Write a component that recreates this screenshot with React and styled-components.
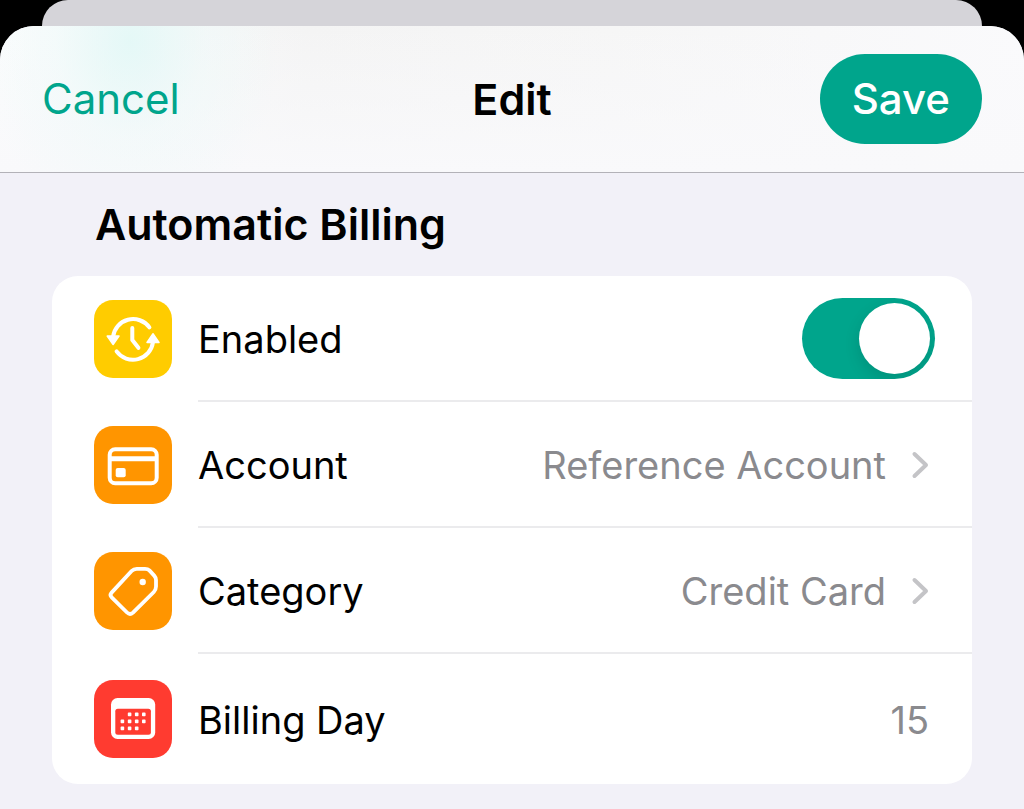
import React, { useState } from 'react';
import styled, { createGlobalStyle } from 'styled-components';

const GlobalStyle = createGlobalStyle`
  * {
    box-sizing: border-box;
  }

  body {
    margin: 0;
    background: #000;
    color: #000;
    font-family: Inter, 'Liberation Sans', sans-serif;
  }

  button,
  input {
    font: inherit;
  }
`;

const Screen = styled.div`
  display: flex;
  flex-direction: column;
  min-height: 100vh;
`;

const BackSheet = styled.div`
  height: 26px;
  margin: 0 42px;
  background: #d5d4d9;
  border-radius: 26px 26px 0 0;
`;

const Sheet = styled.div`
  flex: 1;
  background: #f2f1f8;
  border-radius: 34px 34px 0 0;
  overflow: hidden;
`;

const Header = styled.header`
  display: grid;
  grid-template-columns: 1fr auto 1fr;
  align-items: center;
  height: 147px;
  padding: 0 42px;
  border-bottom: 1px solid #b3b2b8;
  background:
    radial-gradient(ellipse 150px 190px at 130px 15px, rgba(222, 248, 246, 0.75), rgba(235, 250, 249, 0.4) 50%, transparent),
    linear-gradient(to bottom, transparent, #f9f9fb),
    linear-gradient(to right, #fbfcfd, #f4f4f4 30%, #f6f6f6 60%, #fafafc);
`;

const Title = styled.h1`
  margin: 0;
  font-size: 43px;
  font-weight: 600;
  line-height: 52px;
`;

const CancelButton = styled.button`
  justify-self: start;
  padding: 0;
  border: none;
  background: none;
  color: #00a58c;
  font-size: 42px;
  line-height: 52px;
  cursor: pointer;
`;

const SaveButton = styled.button`
  justify-self: end;
  height: 90px;
  padding: 0 32px;
  border: none;
  border-radius: 45px;
  background: #00a58c;
  color: #fff;
  font-size: 42px;
  font-weight: 500;
  line-height: 52px;
  cursor: pointer;
`;

const Content = styled.main`
  padding: 25px 52px;
`;

const SectionTitle = styled.h2`
  margin: 0 0 26px;
  padding-left: 43px;
  font-size: 43px;
  font-weight: 600;
  line-height: 52px;
`;

const Card = styled.section`
  background: #fff;
  border-radius: 26px;
`;

const Row = styled.div`
  display: flex;
  align-items: center;
  gap: 26px;
  padding-left: 42px;
`;

const IconTile = styled.span`
  display: flex;
  flex: none;
  width: 78px;
  height: 78px;
  border-radius: 19px;
  background: ${({ $color }) => $color};
`;

const RowBody = styled.div`
  display: flex;
  flex: 1;
  align-items: center;
  justify-content: space-between;
  min-width: 0;
  height: 126px;
  padding-right: ${({ $inset }) => $inset || 43}px;
  border-bottom: 2px solid #ebebed;

  ${Row}:last-child & {
    height: 130px;
    border-bottom: none;
  }
`;

const Label = styled.label`
  padding-top: 2px;
  font-size: 38px;
  line-height: 48px;
  white-space: nowrap;
`;

const PickerButton = styled.button`
  display: flex;
  align-items: center;
  gap: 25px;
  padding: 2px 0 0;
  border: none;
  background: none;
  color: #8a8a8e;
  font-size: 38px;
  line-height: 48px;
  white-space: nowrap;
  cursor: pointer;
`;

const DayInput = styled.input`
  width: 120px;
  padding: 2px 0 0;
  border: none;
  outline: none;
  background: none;
  color: #8a8a8e;
  font-size: 38px;
  line-height: 48px;
  text-align: right;
`;

const Switch = styled.input`
  appearance: none;
  width: 133px;
  height: 81px;
  margin: 0;
  padding: 5px;
  border-radius: 41px;
  background: #e9e9ea;
  overflow: hidden;
  cursor: pointer;
  transition: background 0.2s;

  &::before {
    content: '';
    display: block;
    width: 71px;
    height: 71px;
    border-radius: 50%;
    background: #fff;
    box-shadow: 0 6px 16px rgba(0, 0, 0, 0.12);
    transition: margin 0.2s;
  }

  &:checked {
    background: #00a58c;
  }

  &:checked::before {
    margin-left: 52px;
  }
`;

const HistoryIcon = () => (
  <svg width="78" height="78" viewBox="0 0 78 78" fill="none" aria-hidden="true">
    <g stroke="#fff" strokeWidth="4" strokeLinecap="round" strokeLinejoin="round">
      <path d="M55.4 27.4A20.2 20.2 0 0 0 19 37" />
      <path d="M22.6 51.4A20.2 20.2 0 0 0 59 42" />
      <path d="M38.3 28V40L44.4 47.8" />
    </g>
    <g fill="#fff" stroke="#fff" strokeWidth="1.5" strokeLinejoin="round">
      <path d="M13.2 36H25L19.1 44.5Z" />
      <path d="M53 42.4H65L59 33.8Z" />
    </g>
  </svg>
);

const CardIcon = () => (
  <svg width="78" height="78" viewBox="0 0 78 78" fill="none" aria-hidden="true">
    <rect x="15.7" y="23.3" width="47" height="34" rx="5.5" stroke="#fff" strokeWidth="4" />
    <path d="M15.7 30.2H62.7V35.2H15.7Z" fill="#fff" />
    <rect x="21.7" y="42" width="10" height="9.2" rx="2" fill="#fff" />
  </svg>
);

const TagIcon = () => (
  <svg width="78" height="78" viewBox="0 0 78 78" fill="none" aria-hidden="true">
    <path
      d="M17.6 40.6L37.6 19C39.4 17.1 40.6 16.8 42.8 16.8H51C53 16.8 54.2 17.2 55.4 18.4L60.2 23.6C61.5 25 62 26 62 28V34.6C62 36.9 61.5 38.2 59.8 40L39 60.6C37 62.4 34.9 62.4 33 60.5L17.7 45.4C16.2 43.9 16.2 42.1 17.6 40.6Z"
      stroke="#fff"
      strokeWidth="3.8"
      strokeLinejoin="round"
    />
    <circle cx="48.7" cy="30" r="3.2" fill="#fff" />
  </svg>
);

const dots = [
  [35.6, 34.4], [42.7, 34.4], [49.8, 34.4],
  [28.4, 41.4], [35.6, 41.4], [42.7, 41.4], [49.8, 41.4],
  [28.4, 48.4], [35.6, 48.4], [42.7, 48.4],
];

const CalendarIcon = () => (
  <svg width="78" height="78" viewBox="0 0 78 78" fill="#fff" aria-hidden="true">
    <rect x="17" y="18" width="44.2" height="41" rx="6.5" />
    <rect x="21.3" y="28.7" width="35.6" height="26" rx="2.5" fill="#ff3b30" />
    {dots.map(([x, y]) => (
      <rect key={`${x}-${y}`} x={x - 1.8} y={y - 1.8} width="3.6" height="3.6" rx="0.8" />
    ))}
  </svg>
);

const Chevron = () => (
  <svg width="18" height="28" viewBox="0 0 18 28" fill="none" aria-hidden="true">
    <path
      d="M3.5 3L15 14L3.5 25"
      stroke="#c4c4c7"
      strokeWidth="4"
      strokeLinecap="round"
      strokeLinejoin="round"
    />
  </svg>
);

const App = () => {
  const [enabled, setEnabled] = useState(true);
  const [day, setDay] = useState('15');

  return (
    <>
      <GlobalStyle />
      <Screen>
        <BackSheet />
        <Sheet>
          <Header>
            <CancelButton type="button">Cancel</CancelButton>
            <Title>Edit</Title>
            <SaveButton type="button">Save</SaveButton>
          </Header>
          <Content>
            <SectionTitle id="billing-title">Automatic Billing</SectionTitle>
            <Card aria-labelledby="billing-title">
              <Row>
                <IconTile $color="#ffcc00">
                  <HistoryIcon />
                </IconTile>
                <RowBody $inset={37}>
                  <Label htmlFor="enabled">Enabled</Label>
                  <Switch
                    id="enabled"
                    type="checkbox"
                    role="switch"
                    checked={enabled}
                    onChange={(e) => setEnabled(e.target.checked)}
                  />
                </RowBody>
              </Row>
              <Row>
                <IconTile $color="#ff9500">
                  <CardIcon />
                </IconTile>
                <RowBody>
                  <Label htmlFor="account">Account</Label>
                  <PickerButton id="account" type="button">
                    Reference Account
                    <Chevron />
                  </PickerButton>
                </RowBody>
              </Row>
              <Row>
                <IconTile $color="#ff9500">
                  <TagIcon />
                </IconTile>
                <RowBody>
                  <Label htmlFor="category">Category</Label>
                  <PickerButton id="category" type="button">
                    Credit Card
                    <Chevron />
                  </PickerButton>
                </RowBody>
              </Row>
              <Row>
                <IconTile $color="#ff3b30">
                  <CalendarIcon />
                </IconTile>
                <RowBody>
                  <Label htmlFor="billing-day">Billing Day</Label>
                  <DayInput
                    id="billing-day"
                    type="text"
                    inputMode="numeric"
                    value={day}
                    onChange={(e) => setDay(e.target.value)}
                  />
                </RowBody>
              </Row>
            </Card>
          </Content>
        </Sheet>
      </Screen>
    </>
  );
};

export default App;
